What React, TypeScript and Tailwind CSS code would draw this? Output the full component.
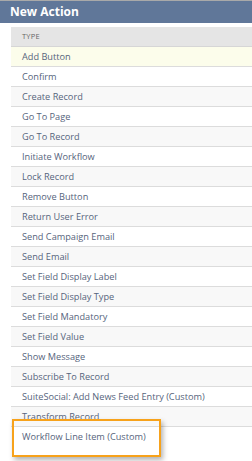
const actions = [
  "Add Button",
  "Confirm",
  "Create Record",
  "Go To Page",
  "Go To Record",
  "Initiate Workflow",
  "Lock Record",
  "Remove Button",
  "Return User Error",
  "Send Campaign Email",
  "Send Email",
  "Set Field Display Label",
  "Set Field Display Type",
  "Set Field Mandatory",
  "Set Field Value",
  "Show Message",
  "Subscribe To Record",
  "SuiteSocial: Add News Feed Entry (Custom)",
  "Transform Record",
  "Workflow Line Item (Custom)",
];

export default function App() {
  return (
    <div
      className="relative w-[252px] h-[461px] overflow-hidden bg-white"
      style={{ fontFamily: '"Open Sans", sans-serif' }}
    >
      {/* title bar */}
      <div className="h-[23px] border-t border-[#a9a9a9] bg-[#607799] pl-[10px] flex items-center">
        <span className="text-[12px] font-bold text-white leading-none">New Action</span>
      </div>

      <div className="ml-[11px] mt-[4px]">
        <div className="h-[20px] bg-[#e5e5e5] border-b border-[#d6d6d6] pl-[11px] flex items-center">
          <span className="text-[7.5px] uppercase text-[#666] tracking-wide">Type</span>
        </div>
        {actions.map((a, i) => {
          const last = i === actions.length - 1;
          const bg = i === 0 ? "bg-[#fcfdeb]" : i % 2 === 0 ? "bg-[#f8f8f8]" : "bg-white";
          return (
            <div
              key={a}
              className={`h-[20px] pl-[11px] flex items-center ${bg} ${last ? "" : "border-b border-[#dcdcdc]"}`}
            >
              <span className="text-[9.2px] text-[#56647c] whitespace-nowrap">{a}</span>
            </div>
          );
        })}
      </div>

      {/* highlight around the custom line item */}
      <div className="absolute left-[12px] top-[419px] w-[149px] h-[38px] border-2 border-[#f7a21b] shadow-[2px_3px_5px_rgba(0,0,0,0.3)]" />
    </div>
  );
}
